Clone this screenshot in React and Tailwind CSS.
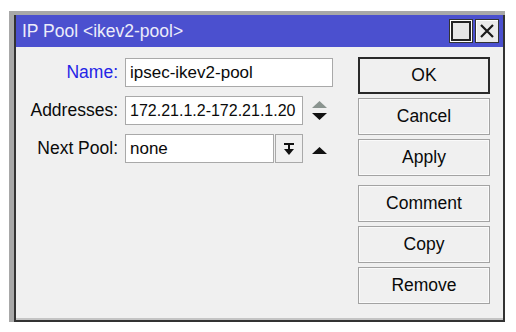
import React from "react";

function Btn({ children, primary }) {
  return (
    <div
      className={
        "h-[37px] flex items-center justify-center bg-[#f0f0f0] text-[17.5px] text-[#0a0a0a] " +
        (primary
          ? "border-2 border-[#2a2a2a]"
          : "border border-[#a3a3a3] shadow-[inset_0_0_0_1px_#fafafa]")
      }
    >
      {children}
    </div>
  );
}

export default function App() {
  return (
    <div
      className="w-[516px] h-[332px] bg-white pt-[11px] pl-[9px]"
      style={{ fontFamily: '"Liberation Sans", Arial, sans-serif' }}
    >
      <div className="w-[496px] h-[311px] border-t-4 border-l-[5px] border-[#a8a8a8] flex flex-col">
        <div className="flex-1 flex flex-col border-l-2 border-r-2 border-b-2 border-[#333]">
          {/* title bar */}
          <div className="h-[32px] bg-[#4b50cf] flex items-center pl-[6px] pr-[4px]">
            <div className="flex-1 text-[17.5px] text-[#ececfa] leading-none pt-[1px]">
              IP Pool &lt;ikev2-pool&gt;
            </div>
            <div className="w-[24px] h-[24px] bg-[#f0f0f0] border border-[#333] p-[1px] flex">
              <div className="flex-1 border-2 border-[#222] bg-[#e6e6e6] shadow-[0_0_0_1px_#fff]" />
            </div>
            <div className="ml-[2px] w-[24px] h-[24px] bg-[#eaeaea] border border-[#333] flex items-center justify-center shadow-[inset_1px_1px_0_#fff]">
              <svg width="16" height="16" viewBox="0 0 16 16">
                <path d="M2 2 L14 14 M14 2 L2 14" stroke="#1a1a1a" strokeWidth="2.2" />
              </svg>
            </div>
          </div>
          {/* body */}
          <div className="flex-1 bg-[#f0f0f0] flex border-b-2 border-[#c4c4c4]">
            <div className="flex-1 pt-[11px] flex flex-col gap-[9px]">
              <div className="flex items-center h-[29px]">
                <div className="w-[102px] text-right text-[17.5px] text-[#2424e6]">Name:</div>
                <div className="ml-[7px] w-[208px] h-[29px] bg-white border border-[#a9a9a9] flex items-center pl-[4px] text-[17px] text-[#0a0a0a]">
                  ipsec-ikev2-pool
                </div>
              </div>
              <div className="flex items-center h-[29px]">
                <div className="w-[102px] text-right text-[17.5px] text-[#0a0a0a] whitespace-nowrap">Addresses:</div>
                <div className="ml-[7px] w-[178px] h-[29px] bg-white border border-[#a9a9a9] flex items-center pl-[4px] text-[16px] text-[#0a0a0a] overflow-hidden whitespace-nowrap">
                  172.21.1.2-172.21.1.20
                </div>
                <svg className="ml-[9px]" width="15" height="20" viewBox="0 0 15 20">
                  <polygon points="0,7 7.5,0 15,7" fill="#8a948f" />
                  <polygon points="0,12 15,12 7.5,19" fill="#111" />
                </svg>
              </div>
              <div className="flex items-center h-[29px]">
                <div className="w-[102px] text-right text-[17.5px] text-[#0a0a0a] whitespace-nowrap">Next Pool:</div>
                <div className="ml-[7px] w-[149px] h-[29px] bg-white border border-[#a9a9a9] flex items-center pl-[4px] text-[17px] text-[#0a0a0a]">
                  none
                </div>
                <div className="ml-[1px] w-[28px] h-[29px] bg-[#f0f0f0] border border-[#a9a9a9] flex items-center justify-center">
                  <svg width="12" height="14" viewBox="0 0 12 14">
                    <rect x="1" y="1" width="10" height="2" fill="#111" />
                    <rect x="5" y="3" width="2" height="5" fill="#111" />
                    <polygon points="1,7 11,7 6,13" fill="#111" />
                  </svg>
                </div>
                <svg className="ml-[9px] mt-[3px]" width="15" height="7" viewBox="0 0 15 7">
                  <polygon points="0,7 7.5,0 15,7" fill="#111" />
                </svg>
              </div>
            </div>
            <div className="w-[132px] mr-[13px] pt-[10px] flex flex-col gap-[4px]">
              <Btn primary>OK</Btn>
              <Btn>Cancel</Btn>
              <Btn>Apply</Btn>
              <div className="h-[1px]" />
              <Btn>Comment</Btn>
              <Btn>Copy</Btn>
              <Btn>Remove</Btn>
            </div>
          </div>
        </div>
      </div>
    </div>
  );
}
